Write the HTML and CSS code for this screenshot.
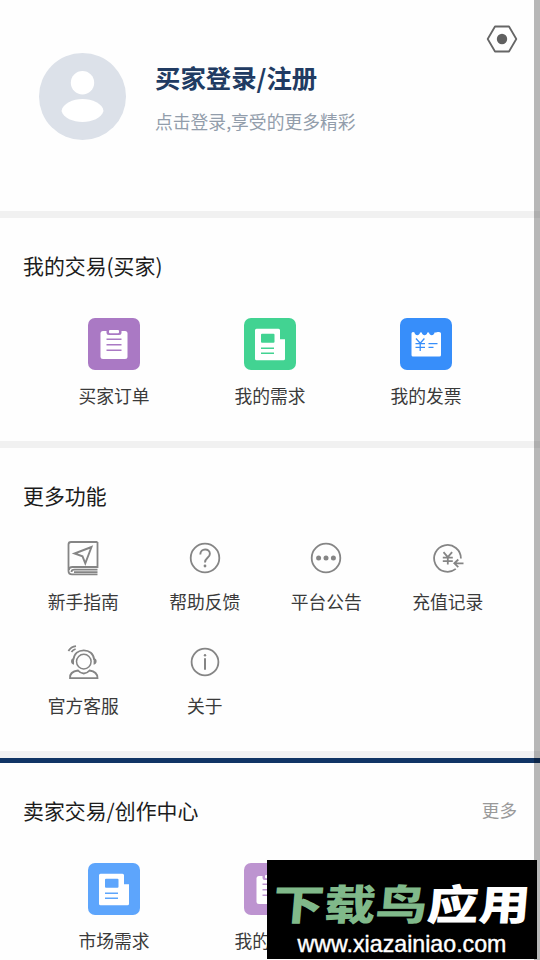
FILE: index.html
```html
<!DOCTYPE html>
<html lang="zh-CN">
<head>
<meta charset="utf-8">
<title>我的</title>
<link rel="stylesheet" href="styles.css">
</head>
<body>
<svg class="defs" aria-hidden="true">
  <symbol id="clipboard" viewBox="0 0 52 52">
    <rect x="12.500" y="13" width="27" height="28" rx="2.500" fill="#fff"/>
    <path d="M18.500 12h15v2.500q0 2.500-2.500 2.500h-10q-2.500 0-2.500-2.500z" fill="currentColor"/>
    <rect x="21" y="12" width="10" height="3.300" rx="1" fill="#fff"/>
    <path d="M18.500 21.200h15M18.500 26.700h15M18.500 32.200h15" stroke="currentColor" stroke-width="1.500"/>
  </symbol>
  <symbol id="paper" viewBox="0 0 52 52">
    <path d="M12.500 10.700h22q1.500 0 1.500 1.500v9h5v19.500q0 1.500-1.500 1.500h-27q-1.500 0-1.500-1.500v-28.500q0-1.500 1.500-1.500z" fill="#fff"/>
    <rect x="17" y="15.800" width="13.500" height="9" rx="1" fill="currentColor"/>
    <path d="M17 30.200h13M17 35.200h13" stroke="currentColor" stroke-width="1.600"/>
  </symbol>
</svg>
<main class="page">
  <header class="profile">
    <svg class="avatar" viewBox="0 0 87 87"><circle cx="43.500" cy="43.500" r="43.500" fill="#dce1e9"/><circle cx="43.500" cy="29.800" r="11.700" fill="#fff"/><path d="M22.500 58C23.500 50.500 34 46 43.500 46S64 50.500 64.500 58C62.500 65 53 69 43.500 69S24.500 65 22.500 58z" fill="#fff"/></svg>
    <div class="login">
      <h1>买家登录/注册</h1>
      <p>点击登录,享受的更多精彩</p>
    </div>
    <svg class="settings" viewBox="0 0 32 28"><path d="M9 1.500h14L30.300 14 23 26.500H9L1.700 14z" fill="none" stroke="#666" stroke-width="1.800" stroke-linejoin="round"/><circle cx="16" cy="14" r="5.200" fill="#606060"/></svg>
  </header>

  <section class="trade">
    <h2>我的交易(买家)</h2>
    <div class="tiles">
      <div class="item"><svg class="tile purple"><use href="#clipboard"/></svg><span>买家订单</span></div>
      <div class="item"><svg class="tile green"><use href="#paper"/></svg><span>我的需求</span></div>
      <div class="item"><svg class="tile blue" viewBox="0 0 52 52"><path d="M11.500 15.500q0-1.500 1.500-1.500 1 0 1.500.5c.5 3.600 5 3.600 5.500 0h1.800c.5 3.600 5 3.600 5.500 0h1.700c.5 3.600 5 3.600 5.500 0h1.500q.4-.5 1.800-.5h1.200q2 0 2 1.500v21.500q0 1.500-1.500 1.500H13q-1.500 0-1.500-1.500z" fill="#fff"/><path d="M16 20.500l4.200 4.700 4.200-4.700M20.200 25v8M15.500 25.700H25M15.500 29.300H25M28.500 25.700h9M28.500 29.300h5" stroke="currentColor" stroke-width="1.300" fill="none"/></svg><span>我的发票</span></div>
    </div>
  </section>

  <section class="more">
    <h2>更多功能</h2>
    <div class="functions">
      <div class="item"><svg class="line" viewBox="0 0 36 36"><path d="M32.500 2H6Q3.500 2 3.500 4.500V31Q3.500 34.300 7 34.300h25.500M32.500 2v25H7.500Q4 27 4 30M32.500 29.700H9.500q-3 0-3 2.200M9 32.200h23.500"/><path d="M26.500 7l-17 6.500 8 2.800 2.800 7z" stroke-width="1.900"/></svg><span>新手指南</span></div>
      <div class="item"><svg class="line" viewBox="0 0 36 36"><circle cx="18" cy="18" r="14.300"/><path d="M13.300 14.400c0-6.400 9.600-6.400 9.600-.7 0 4.300-4.900 4-4.900 8.800" stroke-width="1.900"/><circle class="dot" cx="18" cy="26" r="1.400"/></svg><span>帮助反馈</span></div>
      <div class="item"><svg class="line" viewBox="0 0 36 36"><circle cx="18" cy="18" r="14.300"/><g class="dot"><circle cx="10.600" cy="18" r="2.500"/><circle cx="18" cy="18" r="2.500"/><circle cx="25.400" cy="18" r="2.500"/></g></svg><span>平台公告</span></div>
      <div class="item"><svg class="line" viewBox="0 0 36 36"><path d="M30.900 18.500A13.400 13.400 0 1 0 25.800 28.900M13.500 12.200l4.300 5 4.300-5M17.800 17v7.500M12.800 17.700h10M12.800 21.100h10M33.500 23.300h-8.700M28.300 19.500l-4 3.800 4 3.800"/></svg><span>充值记录</span></div>
      <div class="item"><svg class="line" viewBox="0 0 36 36"><circle cx="18.800" cy="17.600" r="7.300" stroke-width="1.500"/><path d="M8.300 16C9 9.600 13.500 6.300 18.800 6.300S28.700 9.600 29.300 16M13 26.500Q4.500 27.500 5 34.200H32.500Q32.500 27.500 24.500 26.500 22 29.500 18.800 29.500T13 26.500zM3.400 7Q6 2.700 11 2.200M6.500 8Q8 5.800 10.600 5"/><path class="dot" d="M9 14q-3 .5-3 3.200T9 20.700zM28.600 14q3 .5 3 3.200t-3 3.500z"/></svg><span>官方客服</span></div>
      <div class="item"><svg class="line" viewBox="0 0 36 36"><circle cx="18" cy="18" r="13.400"/><path d="M18 14.300v11.500" stroke-width="2"/><circle class="dot" cx="18" cy="11.200" r="1.200"/></svg><span>关于</span></div>
    </div>
  </section>

  <section class="seller">
    <div class="heading"><h2>卖家交易/创作中心</h2><a>更多</a></div>
    <div class="tiles">
      <div class="item"><svg class="tile sky"><use href="#paper"/></svg><span>市场需求</span></div>
      <div class="item"><svg class="tile lilac"><use href="#clipboard"/></svg><span>我的订单</span></div>
    </div>
  </section>
  <div class="edge"></div>
  <aside class="watermark">
    <div class="brand"><b>下载鸟</b><strong>应用</strong></div>
    <div class="site">www.xiazainiao.com</div>
  </aside>
</main>
</body>
</html>
```
FILE: styles.css
```css
* { box-sizing: border-box; }
body { margin: 0; background: #fefefe; font-family: "Noto Sans CJK SC", sans-serif; color: #3a3a3a; }
h1, h2, p { margin: 0; font-weight: 400; white-space: nowrap; }
svg { display: block; flex: none; }
.defs { position: absolute; width: 0; height: 0; }
.page { position: relative; width: 540px; height: 960px; overflow: hidden; }
.profile { height: 218px; border-bottom: 7px solid #f1f1f1; padding: 53px 22px 0 39px; display: flex; align-items: flex-start; }
.avatar { width: 87px; height: 87px; }
.login { flex: 1; padding: 6px 0 0 29px; }
h1 { font-size: 25.4px; line-height: 36px; font-weight: 700; color: #213b62; }
.login p { margin-top: 13px; font-size: 17.8px; line-height: 26px; color: #929dab; }
.settings { width: 32px; height: 28px; margin-top: -28px; }
h2 { font-size: 20.9px; line-height: 30px; color: #1c1c1c; }
.trade { height: 230px; padding: 32px 23px 0; border-bottom: 7px solid #f1f1f1; }
.tiles { display: grid; grid-template-columns: repeat(3, 156px); margin: 38px 0 0 13px; }
.item { display: flex; flex-direction: column; align-items: center; font-size: 17.8px; line-height: 26px; white-space: nowrap; }
.tile { width: 52px; height: 52px; border-radius: 7px; }
.tiles span { margin-top: 12px; }
.purple { background: #aa79c4; color: #aa79c4; }
.green { background: #42d392; color: #42d392; }
.blue { background: #378efa; color: #378efa; }
.sky { background: #5da5fc; color: #5da5fc; }
.lilac { background: #bd94d0; color: #bd94d0; }
.more { height: 310px; padding: 32px 23px 0; border-bottom: 7px solid #f1f1f3; }
.functions { display: grid; grid-template-columns: repeat(4, 121.5px); grid-auto-rows: 104px; margin-top: 30px; margin-left: -0.5px; }
.line { width: 36px; height: 36px; fill: none; stroke: #858585; stroke-width: 1.8; }
.line .dot { fill: #858585; stroke: none; }
.functions span { margin-top: 12px; }
.seller { border-top: 5px solid #103465; padding: 32px 23px 0; }
.heading { display: flex; justify-content: space-between; }
.heading a { font-size: 17.6px; line-height: 30px; color: #999; }
.seller .tiles { margin-top: 38px; }
.edge { position: absolute; top: 0; right: 0; width: 6px; height: 960px; background: rgba(0, 0, 0, .28); }
.watermark { position: absolute; left: 267px; top: 860px; width: 270px; height: 99px; background: #000; color: #fff; display: flex; flex-direction: column; align-items: center; }
.brand { display: flex; margin-top: 12px; font-size: 51.5px; line-height: 60px; font-weight: 900; transform: scaleY(.81) skewX(-4deg); }
.brand b, .brand strong { font-weight: 900; }
.brand b { color: #80b98a; }
.site { font: 23.2px/26px "Liberation Sans", sans-serif; margin-top: -1px; -webkit-text-stroke: .4px #fff; }
```
